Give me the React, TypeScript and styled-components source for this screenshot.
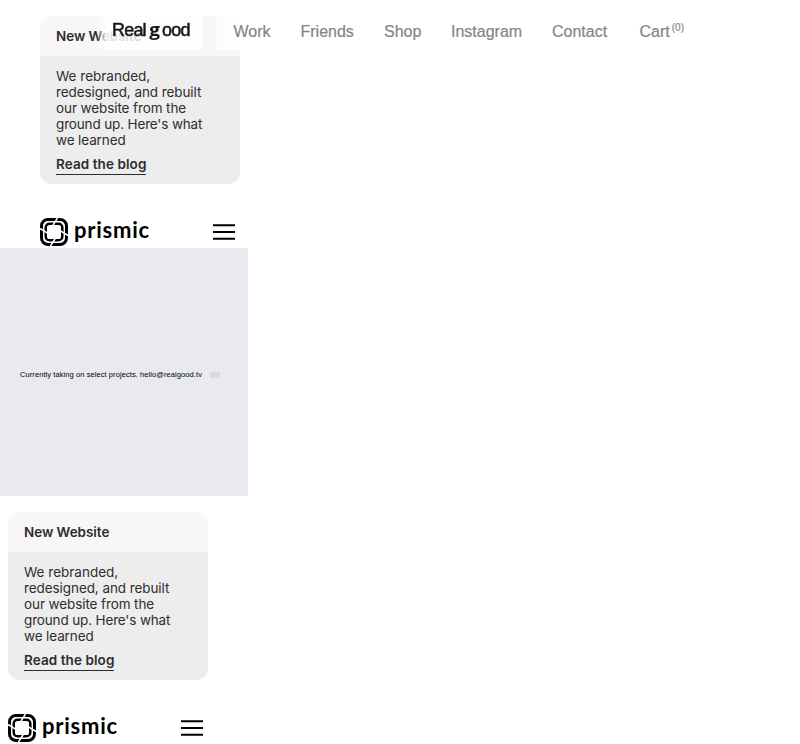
import React from "react";
import styled, { createGlobalStyle } from "styled-components";

const Global = createGlobalStyle`
  * { box-sizing: border-box; }
  html, body { margin: 0; background: #fff; }
  body { height: 744px; overflow: hidden; }
`;

const Page = styled.main`
  position: relative;
  width: 800px;
  height: 744px;
  overflow: hidden;
`;

const Section = styled.section<{ $indent: number }>`
  width: 248px;
  height: 248px;
  padding: 16px 0 0 ${(p) => p.$indent}px;
`;

const Card = styled.article`
  width: 200px;
  height: 168px;
  overflow: hidden;
  border-radius: 12px;
  background: #ededed;
  color: #2d2d2d;
  font: 400 13.5px/16px Inter, sans-serif;
`;

const CardTitle = styled.h2`
  height: 40px;
  margin: 0;
  padding: 0 16px;
  background: #f7f7f7;
  font: 600 13.5px/40px Inter, sans-serif;
  letter-spacing: -0.04px;
`;

const CardBody = styled.div`
  padding: 12px 16px 0;
`;

const Line = styled.div<{ $spacing: number }>`
  white-space: nowrap;
  letter-spacing: ${(p) => p.$spacing}px;
`;

const BlogLink = styled.a`
  display: inline-block;
  height: 19px;
  margin-top: 8px;
  border-bottom: 1px solid #2d2d2d;
  font-weight: 600;
  letter-spacing: 0.08px;
  white-space: nowrap;
`;

const BrandRow = styled.div`
  display: flex;
  align-items: center;
  width: 195px;
  height: 28px;
  margin-top: 34px;
`;

const Wordmark = styled.span`
  margin: -5px auto 0 6px;
  font: 700 22px/28px Lato, sans-serif;
  letter-spacing: 0.75px;
  color: #000;
`;

const Notice = styled.section`
  display: flex;
  align-items: center;
  width: 248px;
  height: 248px;
  padding: 5px 0 0 20px;
  background: #e9eaef;
  color: #000;
  font: 7.5px/10px "Liberation Sans", sans-serif;
  letter-spacing: 0.08px;
  white-space: nowrap;
`;

const NoticeText = styled.span`
  width: 190px;
`;

const NavLayer = styled.header`
  position: absolute;
  top: 12px;
  left: 98px;
  display: flex;
  gap: 13px;
  height: 38px;
  color: #858585;
  font: 16px/39px "Liberation Sans", sans-serif;
`;

const LogoPanel = styled.div`
  width: 105px;
  background: linear-gradient(90deg, rgba(255, 255, 255, 0.2), rgba(255, 255, 255, 0.87) 8px, rgba(255, 255, 255, 0.7));
  backdrop-filter: blur(0.5px);
`;

const Logo = styled.div`
  display: flex;
  padding-left: 14px;
  color: #161616;
  font-size: 18px;
  line-height: 37px;
  letter-spacing: -0.8px;
  -webkit-text-stroke: 0.5px #161616;
  white-space: pre;
`;

const LogoG = styled.span`
  width: 12px;
  font: 700 17px/37px "Open Sans", sans-serif;
  -webkit-text-stroke: 0;
  transform: translateY(-1px) scaleX(1.12);
`;

const Nav = styled.nav`
  display: flex;
  padding-left: 17.5px;
  background: linear-gradient(90deg, rgba(255, 255, 255, 0.65), rgba(255, 255, 255, 0.9) 24px);
  -webkit-text-stroke: 0.2px #858585;
`;

const NavItem = styled.a<{ $width: number }>`
  width: ${(p) => p.$width}px;
  white-space: nowrap;
`;

const Count = styled.sup`
  margin-left: 2px;
  font-size: 10px;
  line-height: 0;
  vertical-align: 6px;
`;

const copy: [string, number][] = [
  ["We rebranded,", 0],
  ["redesigned, and rebuilt", -0.08],
  ["our website from the", -0.1],
  ["ground up. Here's what", -0.15],
  ["we learned", -0.12],
];

const PrismicIcon = () => (
  <svg width="28" height="28" viewBox="0 0 28 28" fill="none" stroke="#000">
    <rect x="1.5" y="1.5" width="25" height="25" rx="6.5" strokeWidth="3" />
    <rect x="5.7" y="5.7" width="16.6" height="16.6" rx="3.8" strokeWidth="2.5" />
    <g stroke="#fff" strokeWidth="1.5">
      <path d="M17.5 0L12.8 7.5M28 17.5L20.5 12.8M10.5 28L15.2 20.5M0 10.5L7.5 15.2" />
    </g>
  </svg>
);

const MenuIcon = () => (
  <svg width="22" height="18" viewBox="0 0 22 18" stroke="#000" strokeWidth="2">
    <path d="M0 2.3H22M0 9H22M0 15.7H22" />
  </svg>
);

const EnvelopeIcon = () => (
  <svg width="10" height="6" viewBox="0 0 10 6">
    <rect width="10" height="6" fill="#dcdddf" />
    <path d="M0 .3L5 3.5L10 .3M0 5.8L3.5 3M10 5.8L6.5 3" fill="none" stroke="#c8c9ca" strokeWidth=".6" />
  </svg>
);

const Promo = ({ indent }: { indent: number }) => (
  <Section $indent={indent}>
    <Card>
      <CardTitle>New Website</CardTitle>
      <CardBody>
        {copy.map(([text, spacing]) => (
          <Line key={text} $spacing={spacing}>{text}</Line>
        ))}
        <BlogLink>Read the blog</BlogLink>
      </CardBody>
    </Card>
    <BrandRow>
      <PrismicIcon />
      <Wordmark>prismic</Wordmark>
      <MenuIcon />
    </BrandRow>
  </Section>
);

export default function App() {
  return (
    <>
      <Global />
      <Page>
        <Promo indent={40} />
        <Notice>
          <NoticeText>Currently taking on select projects. hello@realgood.tv</NoticeText>
          <EnvelopeIcon />
        </Notice>
        <Promo indent={8} />
        <NavLayer>
          <LogoPanel>
            <Logo>
              <span>Real </span><LogoG>g</LogoG><span>ood</span>
            </Logo>
          </LogoPanel>
          <Nav>
            <NavItem $width={67}>Work</NavItem>
            <NavItem $width={83.5}>Friends</NavItem>
            <NavItem $width={67}>Shop</NavItem>
            <NavItem $width={101}>Instagram</NavItem>
            <NavItem $width={87.5}>Contact</NavItem>
            <NavItem $width={50}>Cart<Count>(0)</Count></NavItem>
          </Nav>
        </NavLayer>
      </Page>
    </>
  );
}
